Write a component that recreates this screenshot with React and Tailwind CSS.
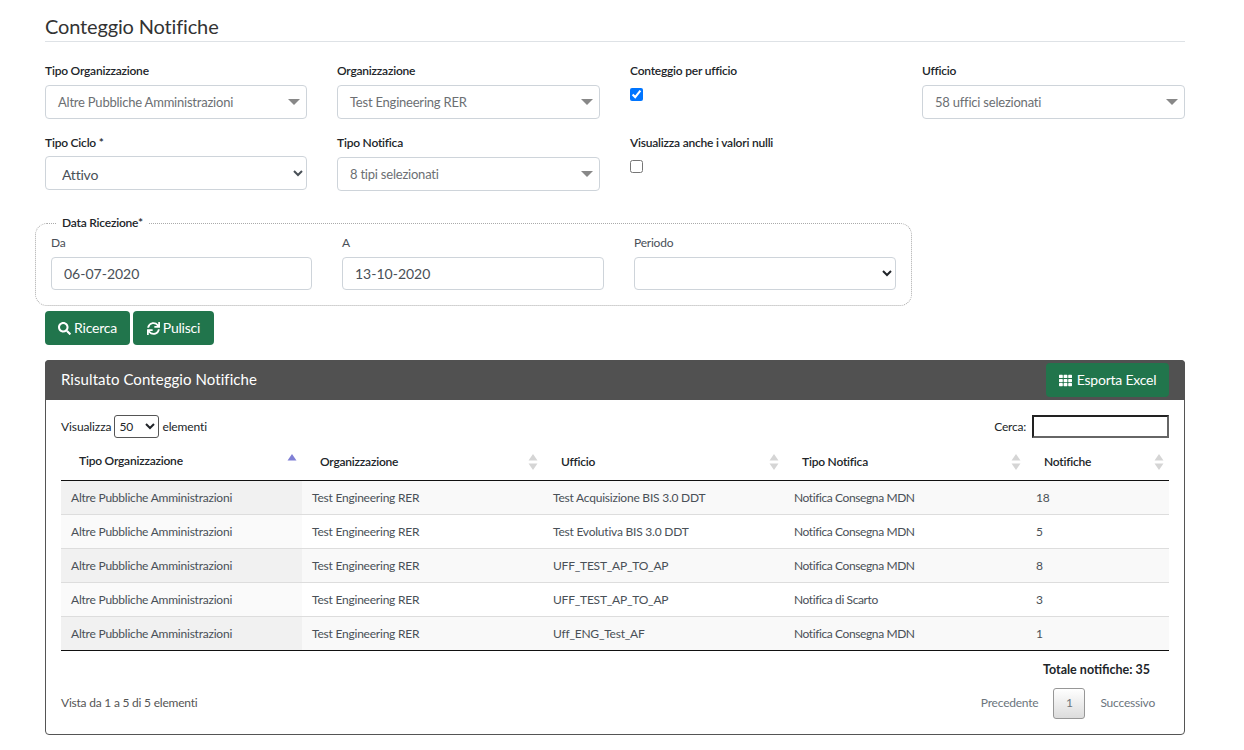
import React from 'react'
import { FaSearch, FaSync, FaTh } from 'react-icons/fa'

const rows = [
	['Altre Pubbliche Amministrazioni', 'Test Engineering RER', 'Test Acquisizione BIS 3.0 DDT', 'Notifica Consegna MDN', '18'],
	['Altre Pubbliche Amministrazioni', 'Test Engineering RER', 'Test Evolutiva BIS 3.0 DDT', 'Notifica Consegna MDN', '5'],
	['Altre Pubbliche Amministrazioni', 'Test Engineering RER', 'UFF_TEST_AP_TO_AP', 'Notifica Consegna MDN', '8'],
	['Altre Pubbliche Amministrazioni', 'Test Engineering RER', 'UFF_TEST_AP_TO_AP', 'Notifica di Scarto', '3'],
	['Altre Pubbliche Amministrazioni', 'Test Engineering RER', 'Uff_ENG_Test_AF', 'Notifica Consegna MDN', '1']
]

function FakeSelect({ children }) {
	return (
		<div className="h-[34px] border border-[#ced4da] rounded flex items-center justify-between pl-3 pr-[6px] text-[13px] text-[#6c6f73] bg-white">
			<span className="pt-[2px]">{children}</span>
			<span className="w-0 h-0 border-x-[6.5px] border-x-transparent border-t-[6px] border-t-[#888888]"></span>
		</div>
	)
}

function Label({ children, className = '' }) {
	return <label className={'block text-xs leading-[18px] font-semibold text-[#212529] ' + className}>{children}</label>
}

function SortIcon({ active }) {
	return (
		<svg width="10" height="18" viewBox="0 0 10 18" className="shrink-0">
			<path d="M5 1 L9.5 7.5 H0.5 Z" fill={active ? '#7f7fd5' : '#d5d5d5'} />
			{!active && <path d="M5 17 L9.5 10.5 H0.5 Z" fill="#d5d5d5" />}
		</svg>
	)
}

export default function App() {
	return (
		<main className="bg-white h-[750px] overflow-hidden pl-[45px] pr-[59px] pt-[13px] font-['Lato',sans-serif] text-[#212529] tracking-[-0.22px]">
			<h1 className="text-xl leading-[26px] pb-[2px] border-b border-[#dee2e6] text-[#333333] tracking-[-0.15px]">Conteggio Notifiche</h1>

			<div className="grid grid-cols-[262px_263px_262px_263px] gap-x-[30px] mt-5">
				<div>
					<Label>Tipo Organizzazione</Label>
					<div className="mt-[5px]"><FakeSelect>Altre Pubbliche Amministrazioni</FakeSelect></div>
				</div>
				<div>
					<Label>Organizzazione</Label>
					<div className="mt-[5px]"><FakeSelect>Test Engineering RER</FakeSelect></div>
				</div>
				<div>
					<Label>Conteggio per ufficio</Label>
					<input type="checkbox" defaultChecked className="block mt-[8px] w-[13px] h-[13px] accent-[#0075ff]" />
				</div>
				<div>
					<Label>Ufficio</Label>
					<div className="mt-[5px]"><FakeSelect>58 uffici selezionati</FakeSelect></div>
				</div>
			</div>

			<div className="grid grid-cols-[262px_263px_262px_263px] gap-x-[30px] mt-[15px]">
				<div>
					<Label>Tipo Ciclo *</Label>
					<select defaultValue="Attivo" className="block w-full mt-1 h-[34px] border border-[#ced4da] rounded bg-white pl-3 pt-[3px] text-sm text-[#495057]">
						<option>Attivo</option>
					</select>
				</div>
				<div>
					<Label>Tipo Notifica</Label>
					<div className="mt-[5px]"><FakeSelect>8 tipi selezionati</FakeSelect></div>
				</div>
				<div>
					<Label>Visualizza anche i valori nulli</Label>
					<input type="checkbox" className="block mt-[8px] w-[13px] h-[13px]" />
				</div>
			</div>

			<fieldset className="w-[877px] h-[90px] -ml-[10px] mt-[25px] border border-dotted border-[#aaaaaa] rounded-xl px-[15px]">
				<legend className="ml-[6px] px-[5px] text-xs leading-[14px] font-semibold">Data Ricezione*</legend>
				<div className="grid grid-cols-[261px_262px_262px] gap-x-[30px]">
					<div>
						<label className="block text-xs leading-[14px] mt-[6px] text-[#495057]">Da</label>
						<input readOnly value="06-07-2020" className="block w-full mt-[7px] h-[33px] border border-[#ced4da] rounded pl-3 text-sm tracking-normal text-[#495057] outline-none" />
					</div>
					<div>
						<label className="block text-xs leading-[14px] mt-[6px] text-[#495057]">A</label>
						<input readOnly value="13-10-2020" className="block w-full mt-[7px] h-[33px] border border-[#ced4da] rounded pl-3 text-sm tracking-normal text-[#495057] outline-none" />
					</div>
					<div>
						<label className="block text-xs leading-[14px] mt-[6px] text-[#495057]">Periodo</label>
						<select className="block w-full mt-[7px] h-[33px] border border-[#ced4da] rounded bg-white text-sm">
							<option></option>
						</select>
					</div>
				</div>
			</fieldset>

			<div className="flex gap-[3px] mt-[5px]">
				<button className="h-[34px] w-[85px] bg-[#21754c] text-white rounded text-sm flex items-center justify-center gap-[3px]">
					<FaSearch size={13} />
					Ricerca
				</button>
				<button className="h-[34px] w-[81px] bg-[#21754c] text-white rounded text-sm flex items-center justify-center gap-[3px]">
					<FaSync size={13} />
					Pulisci
				</button>
			</div>

			<section className="mt-[15px] h-[375px] border border-[#555555] rounded">
				<div className="h-[40px] -mx-px -mt-px bg-[#515151] rounded-t flex items-center justify-between pl-4 pr-4">
					<h2 className="text-[15px] tracking-[0.07px] pb-[2px] text-white">Risultato Conteggio Notifiche</h2>
					<button className="h-[34px] w-[123px] bg-[#21754c] text-white rounded text-sm flex items-center justify-center gap-[5px]">
						<FaTh size={13} />
						Esporta Excel
					</button>
				</div>

				<div className="px-[15px]">
					<div className="flex items-center justify-between mt-[15px] h-[23px] text-xs">
						<div className="flex items-center gap-[3px] tracking-[-0.1px]">
							<span>Visualizza</span>
							<select defaultValue="50" className="w-[45px] h-[23px] border border-[#555555] rounded-[3px] bg-white text-xs">
								<option>50</option>
							</select>
							<span>elementi</span>
						</div>
						<div className="flex items-center gap-[6px]">
							<span>Cerca:</span>
							<input className="w-[137px] h-[23px] border-2 border-t-[#222222] border-l-[#222222] border-r-[#666666] border-b-[#666666] outline-none" />
						</div>
					</div>

					<table className="w-full table-fixed mt-[6px] text-xs">
						<colgroup>
							<col className="w-[241px]" />
							<col className="w-[241px]" />
							<col className="w-[241px]" />
							<col className="w-[242px]" />
							<col />
						</colgroup>
						<thead>
							<tr className="h-[36px] border-b border-[#111111]">
								{['Tipo Organizzazione', 'Organizzazione', 'Ufficio', 'Tipo Notifica', 'Notifiche'].map((h, i) => (
									<th key={h} className="pl-[18px] pr-[5px] font-semibold text-left">
										<div className={i === 0 ? 'flex justify-between items-start' : 'flex justify-between items-center'}>
											<span>{h}</span>
											<SortIcon active={i === 0} />
										</div>
									</th>
								))}
							</tr>
						</thead>
						<tbody>
							{rows.map((r, i) => (
								<tr key={i} className={(i % 2 === 0 ? 'bg-[#f9f9f9]' : 'bg-white') + ' h-[34px] border-b ' + (i === rows.length - 1 ? 'border-[#111111]' : 'border-[#dddddd]')}>
									{r.map((c, j) => (
										<td key={j} className={'pl-[10px] pt-[1px] text-[#495057] ' + (j === 0 ? (i % 2 === 0 ? 'bg-[#f1f1f1]' : 'bg-[#fafafa]') : '') + (j === 3 ? ' tracking-[-0.4px]' : '')}>{c}</td>
									))}
								</tr>
							))}
						</tbody>
					</table>

					<p className="text-[12.5px] font-bold tracking-normal text-right pr-[19px] mt-[11px] leading-[16px]">Totale notifiche: 35</p>

					<div className="flex items-center justify-between mt-[10px] text-xs text-[#555555]">
						<span>Vista da 1 a 5 di 5 elementi</span>
						<div className="flex items-center text-xs text-[#6c757d]">
							<span className="mr-[15px]">Precedente</span>
							<span className="w-[32px] h-[31px] border border-[#979797] rounded-[3px] bg-gradient-to-b from-white to-[#dcdcdc] flex items-center justify-center">1</span>
							<span className="ml-[15px] mr-[14px]">Successivo</span>
						</div>
					</div>
				</div>
			</section>
		</main>
	)
}
